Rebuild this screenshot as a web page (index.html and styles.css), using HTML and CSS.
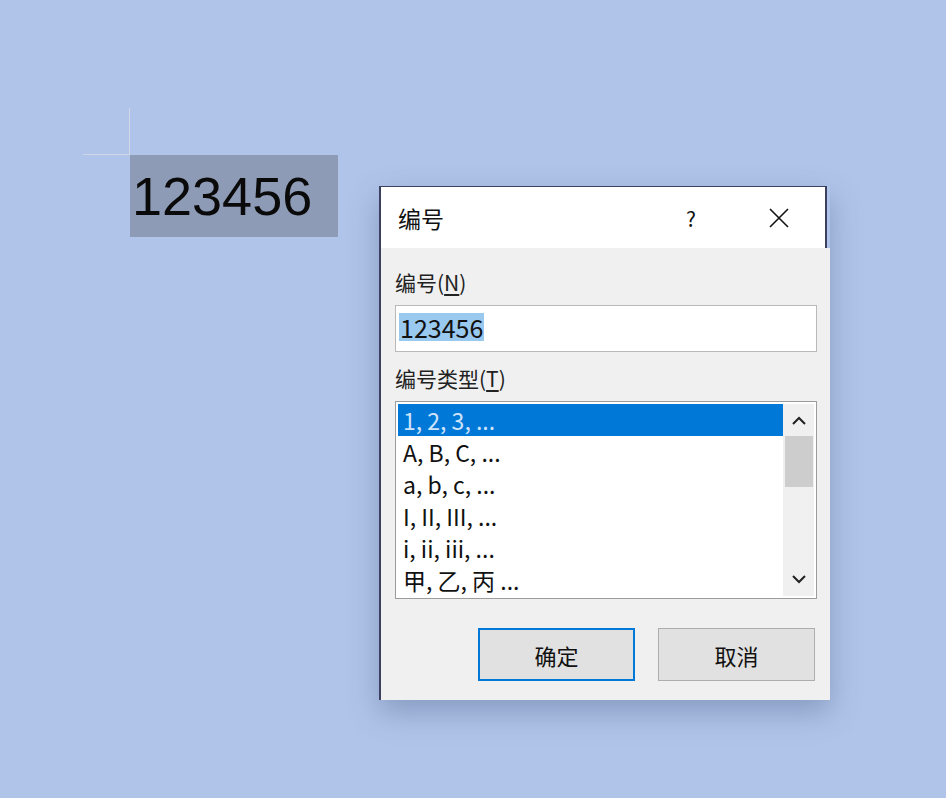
FILE: index.html
```html
<!DOCTYPE html>
<html>
<head>
<meta charset="utf-8" />
<title>编号</title>
<link rel="stylesheet" href="styles.css">
</head>
<body>
<div class="desk">
	<div class="mark"><span class="markV"></span><span class="markH"></span></div>
	<div class="selText">123456</div>

	<div class="dialog">
		<div class="titleBar">
			<span class="titleText">编号</span>
			<span class="help">?</span>
			<span class="close">
				<svg width="22" height="22" viewBox="0 0 22 22"><path d="M2 2L20 20M20 2L2 20" stroke="#111" stroke-width="1.6" fill="none"/></svg>
			</span>
		</div>
		<div class="dlgBody">
			<div class="label">编号(<u>N</u>)</div>
			<div class="field"><span class="fieldSel">123456</span></div>
			<div class="label">编号类型(<u>T</u>)</div>
			<div class="listBox">
				<ul class="items">
					<li class="on">1, 2, 3, ...</li>
					<li>A, B, C, ...</li>
					<li>a, b, c, ...</li>
					<li>I, II, III, ...</li>
					<li>i, ii, iii, ...</li>
					<li>甲, 乙, 丙 ...</li>
				</ul>
				<div class="scroll">
					<svg class="arrow" width="16" height="10" viewBox="0 0 16 10"><path d="M2 8L8 2L14 8" stroke="#222" stroke-width="2" fill="none"/></svg>
					<div class="thumb"></div>
					<div class="track"></div>
					<svg class="arrow" width="16" height="10" viewBox="0 0 16 10"><path d="M2 2L8 8L14 2" stroke="#222" stroke-width="2" fill="none"/></svg>
				</div>
			</div>
			<div class="btns">
				<button class="btn btnDef">确定</button>
				<button class="btn">取消</button>
			</div>
		</div>
	</div>
</div>
</body>
</html>
```

FILE: styles.css
```css
body{ margin: 0; background: #b0c4e9; font-family: "Noto Sans CJK SC", "Noto Sans", sans-serif; }
.desk{ position: relative; width: 946px; height: 798px; overflow: hidden; }

/* 左侧：选中的文字 */
.mark{ position: absolute; left: 83px; top: 108px; width: 47px; height: 47px; }
.markV{ position: absolute; right: 0; top: 0; width: 1px; height: 47px; background: #cfd6e6; }
.markH{ position: absolute; left: 0; bottom: 0; height: 1px; width: 47px; background: #cfd6e6; }
.selText{ position: absolute; left: 130px; top: 155px; width: 208px; height: 82px; background: #8e9bb6; font-family: "Liberation Sans", sans-serif; font-size: 54px; line-height: 82px; color: #0a0a0a; padding-left: 2px; box-sizing: border-box; }

/* 弹出框 */
.dialog{ position: absolute; left: 379px; top: 186px; width: 449px; border-left: 2px solid #3b4060; box-shadow: 0 12px 28px rgba(60,80,120,.35); }
.titleBar{ width: 444px; height: 61px; background: #fff; border-top: 1px solid #3b4060; border-right: 2px solid #3b4060; display: flex; align-items: center; }
.titleText{ font-size: 23px; margin-left: 17px; color: #111; flex: 1; }
.help{ font-size: 21px; color: #111; width: 20px; margin-right: 67px; text-align: center; }
.close{ width: 22px; height: 22px; margin-right: 35px; display: flex; }

.dlgBody{ background: #f0f0f0; height: 452px; padding: 20px 13px 0 14px; box-sizing: border-box; }
.label{ font-size: 21px; color: #222; line-height: 28px; }
.label u{ text-underline-offset: 3px; }
.field{ margin: 9px 0 12px; height: 47px; background: #fff; border: 1px solid #b9b9b9; box-sizing: border-box; padding: 7px 0 0 3px; }
.fieldSel{ display: inline-block; background: #99c9ef; font-size: 25px; line-height: 28px; color: #111; padding: 0 1px; }

.listBox{ margin-top: 9px; height: 198px; background: #fff; border: 1px solid #9c9c9c; box-sizing: border-box; display: flex; padding: 2px; }
.items{ list-style: none; margin: 0; padding: 0; flex: 1; }
.items li{ height: 32px; line-height: 32px; font-size: 23px; color: #111; padding-left: 5px; }
.items li.on{ background: #0078d7; color: #cfe4fb; }
.scroll{ width: 31px; background: #f0f0f0; display: flex; flex-direction: column; align-items: center; }
.arrow{ margin: 12px 0 10px; }
.arrow:last-child{ margin: 10px 0 12px; }
.thumb{ width: 28px; height: 51px; background: #cdcdcd; }
.track{ flex: 1; }

.btns{ display: flex; justify-content: flex-end; gap: 23px; margin: 29px 2px 0 0; }
.btn{ width: 157px; height: 53px; background: #e1e1e1; border: 1px solid #adadad; font-family: "Noto Sans CJK SC", sans-serif; font-size: 22px; color: #111; padding: 0; }
.btnDef{ border: 2px solid #0078d7; }
```
